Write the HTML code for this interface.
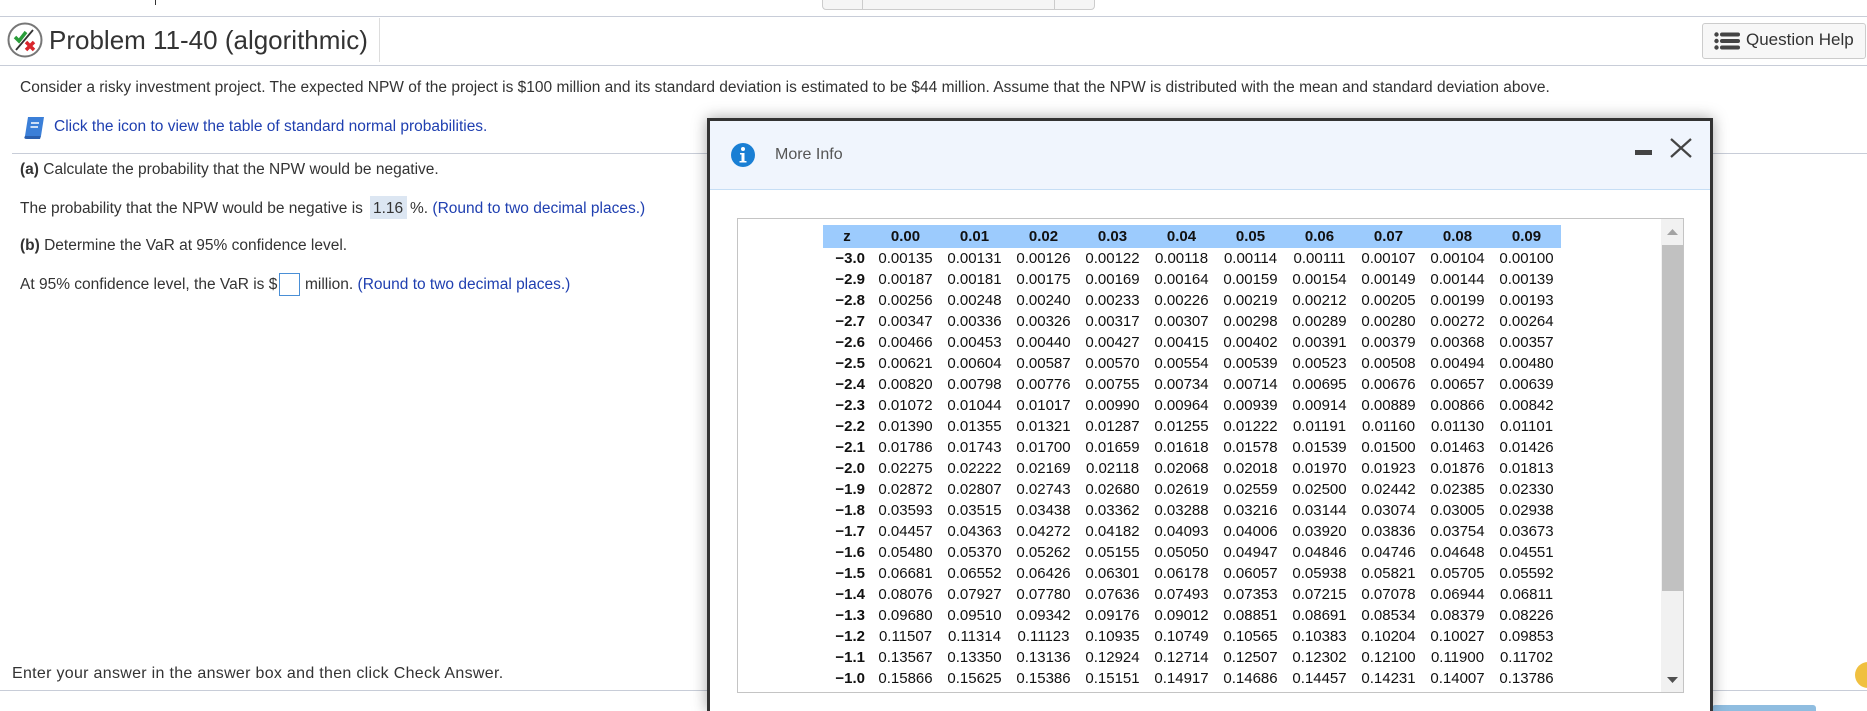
<!DOCTYPE html>
<html style="width:1867px;height:711px;overflow:hidden"><head><meta charset="utf-8">
<style>
*{margin:0;padding:0;box-sizing:border-box}
body{width:1867px;height:711px;position:relative;overflow:hidden;background:#fff;font-family:"Liberation Sans",Arial,sans-serif;color:#333}
.abs{position:absolute}
.hl{position:absolute;height:1px;background:#c8cdd8}
.t{position:absolute;white-space:nowrap;font-size:15.5px;line-height:20px}
.blue{color:#1f3fb0}
table{border-collapse:collapse;font-size:15px;color:#111;table-layout:fixed}
td{height:21px;line-height:21px;text-align:center;padding:0;white-space:nowrap}
td.l{text-align:right;padding-right:6px;font-weight:bold}
tr.h td{height:23px;background:#9ccbfd;font-weight:bold}
</style></head><body>
<div class="abs" style="left:822px;top:-4px;width:273px;height:14px;background:#f5f5f5;border:1px solid #ccc;border-radius:4px"></div>
<div class="abs" style="left:862px;top:0;width:1px;height:10px;background:#ccc"></div>
<div class="abs" style="left:1054px;top:0;width:1px;height:10px;background:#ccc"></div>
<div class="abs" style="left:155px;top:0;width:1px;height:5px;background:#333"></div>
<div class="hl" style="left:0;top:16px;width:1867px"></div>
<div class="hl" style="left:0;top:65px;width:1867px"></div>
<svg class="abs" style="left:7px;top:22px" width="36" height="36" viewBox="0 0 36 36">
<circle cx="18" cy="18" r="16.5" fill="#fff" stroke="#777" stroke-width="2"/>
<path d="M8 15 L12 19 L19 10" stroke="#2a9d3a" stroke-width="3.5" fill="none"/>
<path d="M9 28 L26 8" stroke="#333" stroke-width="1.8"/>
<path d="M19 20 L27 28 M27 20 L19 28" stroke="#d8262c" stroke-width="3.5"/>
</svg>
<div class="t" style="left:49px;top:25px;font-size:26px;line-height:30px;color:#333">Problem 11-40 (algorithmic)</div>
<div class="abs" style="left:379px;top:18px;width:1px;height:44px;background:#ddd"></div>
<div class="abs" style="left:1702px;top:23px;width:164px;height:36px;background:#f7f7f7;border:1px solid #ccc;border-radius:3px"></div>
<svg class="abs" style="left:1714px;top:32px" width="27" height="18" viewBox="0 0 27 18">
<g fill="#444"><circle cx="2.5" cy="2.5" r="2.2"/><circle cx="2.5" cy="9" r="2.2"/><circle cx="2.5" cy="15.5" r="2.2"/>
<rect x="6" y="0.5" width="20" height="4" rx="2"/><rect x="6" y="7" width="20" height="4" rx="2"/><rect x="6" y="13.5" width="20" height="4" rx="2"/></g></svg>
<div class="t" style="left:1746px;top:30px;font-size:17px;color:#333">Question Help</div>
<div class="t" style="left:20px;top:78px">Consider a risky investment project. The expected NPW of the project is $100 million and its standard deviation is estimated to be $44 million. Assume that the NPW is distributed with the mean and standard deviation above.</div>
<svg class="abs" style="left:22px;top:116px" width="24" height="24" viewBox="0 0 24 24">
<path d="M6 1 H22 L19 20 H3 Z" fill="#3b7fd8"/><path d="M3 20 Q1 23 5 23 H18 L19 20 Z" fill="#2a5fae"/>
<path d="M9 7 H17 M8.5 11 H16" stroke="#fff" stroke-width="1.6"/></svg>
<div class="t blue" style="left:54px;top:117px">Click the icon to view the table of standard normal probabilities.</div>
<div class="hl" style="left:12px;top:153px;width:1855px"></div>
<div class="t" style="left:20px;top:160px"><b>(a)</b> Calculate the probability that the NPW would be negative.</div>
<div class="t" style="left:20px;top:199px">The probability that the NPW would be negative is</div>
<div class="abs" style="left:370px;top:196px;width:37px;height:23px;background:#dce6f2"></div>
<div class="t" style="left:373px;top:199px">1.16</div>
<div class="t" style="left:410px;top:199px">%. <span class="blue">(Round to two decimal places.)</span></div>
<div class="t" style="left:20px;top:236px"><b>(b)</b> Determine the VaR at 95% confidence level.</div>
<div class="t" style="left:20px;top:275px">At 95% confidence level, the VaR is $</div>
<div class="abs" style="left:279px;top:273px;width:21px;height:23px;border:1px solid #4a8fd6"></div>
<div class="t" style="left:305px;top:275px">million. <span class="blue">(Round to two decimal places.)</span></div>
<div class="t" style="left:12px;top:664px;font-size:16px;letter-spacing:0.3px">Enter your answer in the answer box and then click Check Answer.</div>
<div class="hl" style="left:0;top:690px;width:1867px"></div>
<div class="abs" style="left:1712px;top:705px;width:104px;height:6px;background:#8fbde0;border-radius:3px 3px 0 0"></div>
<div class="abs" style="left:1855px;top:662px;width:26px;height:26px;border-radius:50%;background:#f0c040"></div>
<div class="abs" style="left:707px;top:118px;width:1006px;height:593px;border:3px solid #333;border-bottom:none;background:#fff;box-shadow:0 0 14px rgba(0,0,0,.35)"></div>
<div class="abs" style="left:710px;top:121px;width:1000px;height:69px;background:#f0f5fd;border-bottom:1px solid #c6def5"></div>
<svg class="abs" style="left:731px;top:143px" width="24" height="24" viewBox="0 0 24 24"><circle cx="12" cy="12" r="12" fill="#1a7fd4"/><circle cx="12" cy="6" r="2" fill="#fff"/><path d="M9 10 H13.5 V18 H15.5 V19.5 H8.5 V18 H10.5 V11.5 H9 Z" fill="#fff"/></svg>
<div class="t" style="left:775px;top:145px;font-size:16px;color:#555">More Info</div>
<div class="abs" style="left:1635px;top:150px;width:17px;height:5px;background:#444"></div>
<svg class="abs" style="left:1670px;top:138px" width="22" height="20" viewBox="0 0 22 20"><path d="M1 1 L21 19 M21 1 L1 19" stroke="#444" stroke-width="2.2"/></svg>
<div class="abs" style="left:737px;top:218px;width:947px;height:475px;border:1px solid #c4c4c4;background:#fff;overflow:hidden">
<div class="abs" style="left:923px;top:0;width:23px;height:473px;background:#f1f1f1"></div>
<div class="abs" style="left:924px;top:26px;width:21px;height:346px;background:#c1c1c1"></div>
<svg class="abs" style="left:929px;top:9px" width="11" height="7"><path d="M0 7 L5.5 1 L11 7Z" fill="#a3a3a3"/></svg>
<svg class="abs" style="left:929px;top:458px" width="11" height="7"><path d="M0 0 L5.5 6 L11 0Z" fill="#505050"/></svg>
<table class="abs" style="left:85px;top:6px">
<colgroup><col style="width:48px"><col style="width:69px"><col style="width:69px"><col style="width:69px"><col style="width:69px"><col style="width:69px"><col style="width:69px"><col style="width:69px"><col style="width:69px"><col style="width:69px"><col style="width:69px"></colgroup>
<tr class="h"><td style="text-align:center">z</td><td>0.00</td><td>0.01</td><td>0.02</td><td>0.03</td><td>0.04</td><td>0.05</td><td>0.06</td><td>0.07</td><td>0.08</td><td>0.09</td></tr>
<tr><td class="l">−3.0</td><td>0.00135</td><td>0.00131</td><td>0.00126</td><td>0.00122</td><td>0.00118</td><td>0.00114</td><td>0.00111</td><td>0.00107</td><td>0.00104</td><td>0.00100</td></tr>
<tr><td class="l">−2.9</td><td>0.00187</td><td>0.00181</td><td>0.00175</td><td>0.00169</td><td>0.00164</td><td>0.00159</td><td>0.00154</td><td>0.00149</td><td>0.00144</td><td>0.00139</td></tr>
<tr><td class="l">−2.8</td><td>0.00256</td><td>0.00248</td><td>0.00240</td><td>0.00233</td><td>0.00226</td><td>0.00219</td><td>0.00212</td><td>0.00205</td><td>0.00199</td><td>0.00193</td></tr>
<tr><td class="l">−2.7</td><td>0.00347</td><td>0.00336</td><td>0.00326</td><td>0.00317</td><td>0.00307</td><td>0.00298</td><td>0.00289</td><td>0.00280</td><td>0.00272</td><td>0.00264</td></tr>
<tr><td class="l">−2.6</td><td>0.00466</td><td>0.00453</td><td>0.00440</td><td>0.00427</td><td>0.00415</td><td>0.00402</td><td>0.00391</td><td>0.00379</td><td>0.00368</td><td>0.00357</td></tr>
<tr><td class="l">−2.5</td><td>0.00621</td><td>0.00604</td><td>0.00587</td><td>0.00570</td><td>0.00554</td><td>0.00539</td><td>0.00523</td><td>0.00508</td><td>0.00494</td><td>0.00480</td></tr>
<tr><td class="l">−2.4</td><td>0.00820</td><td>0.00798</td><td>0.00776</td><td>0.00755</td><td>0.00734</td><td>0.00714</td><td>0.00695</td><td>0.00676</td><td>0.00657</td><td>0.00639</td></tr>
<tr><td class="l">−2.3</td><td>0.01072</td><td>0.01044</td><td>0.01017</td><td>0.00990</td><td>0.00964</td><td>0.00939</td><td>0.00914</td><td>0.00889</td><td>0.00866</td><td>0.00842</td></tr>
<tr><td class="l">−2.2</td><td>0.01390</td><td>0.01355</td><td>0.01321</td><td>0.01287</td><td>0.01255</td><td>0.01222</td><td>0.01191</td><td>0.01160</td><td>0.01130</td><td>0.01101</td></tr>
<tr><td class="l">−2.1</td><td>0.01786</td><td>0.01743</td><td>0.01700</td><td>0.01659</td><td>0.01618</td><td>0.01578</td><td>0.01539</td><td>0.01500</td><td>0.01463</td><td>0.01426</td></tr>
<tr><td class="l">−2.0</td><td>0.02275</td><td>0.02222</td><td>0.02169</td><td>0.02118</td><td>0.02068</td><td>0.02018</td><td>0.01970</td><td>0.01923</td><td>0.01876</td><td>0.01813</td></tr>
<tr><td class="l">−1.9</td><td>0.02872</td><td>0.02807</td><td>0.02743</td><td>0.02680</td><td>0.02619</td><td>0.02559</td><td>0.02500</td><td>0.02442</td><td>0.02385</td><td>0.02330</td></tr>
<tr><td class="l">−1.8</td><td>0.03593</td><td>0.03515</td><td>0.03438</td><td>0.03362</td><td>0.03288</td><td>0.03216</td><td>0.03144</td><td>0.03074</td><td>0.03005</td><td>0.02938</td></tr>
<tr><td class="l">−1.7</td><td>0.04457</td><td>0.04363</td><td>0.04272</td><td>0.04182</td><td>0.04093</td><td>0.04006</td><td>0.03920</td><td>0.03836</td><td>0.03754</td><td>0.03673</td></tr>
<tr><td class="l">−1.6</td><td>0.05480</td><td>0.05370</td><td>0.05262</td><td>0.05155</td><td>0.05050</td><td>0.04947</td><td>0.04846</td><td>0.04746</td><td>0.04648</td><td>0.04551</td></tr>
<tr><td class="l">−1.5</td><td>0.06681</td><td>0.06552</td><td>0.06426</td><td>0.06301</td><td>0.06178</td><td>0.06057</td><td>0.05938</td><td>0.05821</td><td>0.05705</td><td>0.05592</td></tr>
<tr><td class="l">−1.4</td><td>0.08076</td><td>0.07927</td><td>0.07780</td><td>0.07636</td><td>0.07493</td><td>0.07353</td><td>0.07215</td><td>0.07078</td><td>0.06944</td><td>0.06811</td></tr>
<tr><td class="l">−1.3</td><td>0.09680</td><td>0.09510</td><td>0.09342</td><td>0.09176</td><td>0.09012</td><td>0.08851</td><td>0.08691</td><td>0.08534</td><td>0.08379</td><td>0.08226</td></tr>
<tr><td class="l">−1.2</td><td>0.11507</td><td>0.11314</td><td>0.11123</td><td>0.10935</td><td>0.10749</td><td>0.10565</td><td>0.10383</td><td>0.10204</td><td>0.10027</td><td>0.09853</td></tr>
<tr><td class="l">−1.1</td><td>0.13567</td><td>0.13350</td><td>0.13136</td><td>0.12924</td><td>0.12714</td><td>0.12507</td><td>0.12302</td><td>0.12100</td><td>0.11900</td><td>0.11702</td></tr>
<tr><td class="l">−1.0</td><td>0.15866</td><td>0.15625</td><td>0.15386</td><td>0.15151</td><td>0.14917</td><td>0.14686</td><td>0.14457</td><td>0.14231</td><td>0.14007</td><td>0.13786</td></tr>
</table>
</div>
</body></html>
